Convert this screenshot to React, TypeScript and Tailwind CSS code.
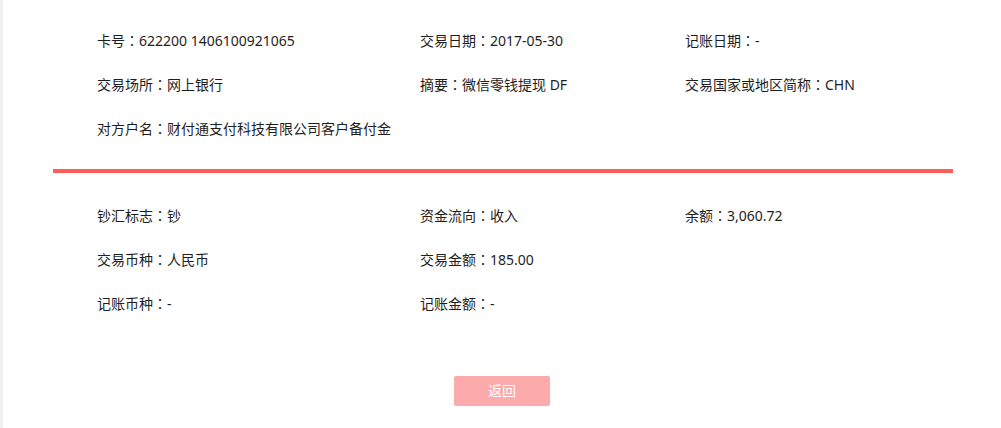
import React from "react";

const font = { fontFamily: '"Noto Sans", "Noto Sans CJK SC", sans-serif' };

function Cell({ text }: { text: string }) {
  const idx = text.indexOf("：");
  if (idx < 0) return <>{text}</>;
  return (
    <>
      {text.slice(0, idx)}
      <span className="font-['Noto_Sans_CJK_JP',sans-serif]">：</span>
      {text.slice(idx + 1)}
    </>
  );
}

function Row({ cells }: { cells: string[] }) {
  return (
    <div className="grid grid-cols-[323px_265px_1fr] h-[44px] items-center pl-[44px]">
      {cells.map((c, i) => (
        <div key={i} className="text-[14px] leading-[20px] text-[#1e1e1e] whitespace-nowrap">
          <Cell text={c} />
        </div>
      ))}
    </div>
  );
}

export default function App() {
  return (
    <div className="flex min-h-[428px] bg-white" style={font}>
      <div className="w-[3px] shrink-0 bg-[#efefef]" />
      <div className="ml-[50px] w-[900px]">
        <div className="pt-[18px]">
          <Row cells={["卡号：622200 1406100921065", "交易日期：2017-05-30", "记账日期：-"]} />
          <Row cells={["交易场所：网上银行", "摘要：微信零钱提现 DF", "交易国家或地区简称：CHN"]} />
          <Row cells={["对方户名：财付通支付科技有限公司客户备付金", "", ""]} />
        </div>
        <div className="mt-[19px] h-[4px] bg-[#ff5c5c]" />
        <div className="pt-[20px]">
          <Row cells={["钞汇标志：钞", "资金流向：收入", "余额：3,060.72"]} />
          <Row cells={["交易币种：人民币", "交易金额：185.00", ""]} />
          <Row cells={["记账币种：-", "记账金额：-", ""]} />
        </div>
        <div className="mt-[51px] flex justify-center">
          <button className="w-[96px] h-[30px] rounded-[2px] bg-[#fcaaac] text-white text-[14px] leading-[30px] ml-[-2px]">
            返回
          </button>
        </div>
      </div>
    </div>
  );
}
